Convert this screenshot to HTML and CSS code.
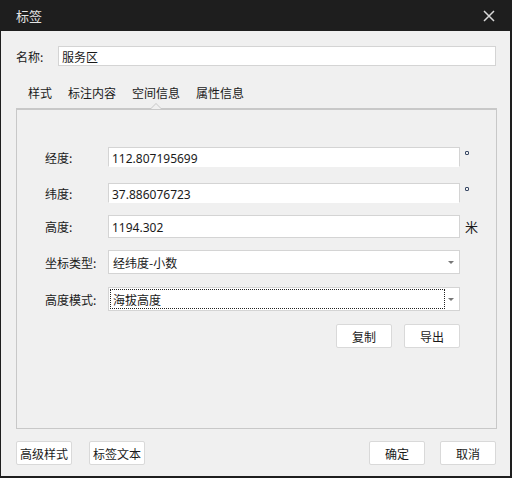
FILE: index.html
```html
<!DOCTYPE html>
<html lang="zh">
<head>
<meta charset="utf-8">
<title>标签</title>
<link rel="stylesheet" href="styles.css">
</head>
<body>
<div class="window">
  <div class="titlebar">
    <span class="title">标签</span>
    <svg class="close" width="12" height="12" viewBox="0 0 12 12"><path d="M1 1 L11 11 M11 1 L1 11" stroke="#d8d8d8" stroke-width="1.5" fill="none"/></svg>
  </div>
  <div class="content">
    <div class="name-row">
      <span class="label">名称:</span>
      <div class="input name-input">服务区</div>
    </div>
    <div class="tabs">
      <span class="tab">样式</span>
      <span class="tab">标注内容</span>
      <span class="tab active">空间信息</span>
      <span class="tab">属性信息</span>
    </div>
    <div class="panel">
      <div class="row r1">
        <span class="flabel">经度:</span>
        <div class="input field short">112.807195699</div>
        <span class="unit"><span class="deg"></span></span>
      </div>
      <div class="row r2">
        <span class="flabel">纬度:</span>
        <div class="input field short">37.886076723</div>
        <span class="unit"><span class="deg"></span></span>
      </div>
      <div class="row r3">
        <span class="flabel">高度:</span>
        <div class="input field">1194.302</div>
        <span class="unit mi">米</span>
      </div>
      <div class="row r4">
        <span class="flabel">坐标类型:</span>
        <div class="input field select"><span class="sel-text">经纬度-小数</span><span class="arrow"></span></div>
      </div>
      <div class="row r5">
        <span class="flabel">高度模式:</span>
        <div class="input field select"><span class="sel-text focus">海拔高度</span><span class="arrow"></span></div>
      </div>
      <div class="actions">
        <button class="btn">复制</button>
        <button class="btn">导出</button>
      </div>
    </div>
    <div class="footer">
      <div class="group">
        <button class="btn">高级样式</button>
        <button class="btn">标签文本</button>
      </div>
      <div class="group right">
        <button class="btn">确定</button>
        <button class="btn">取消</button>
      </div>
    </div>
  </div>
</div>
</body>
</html>
```
FILE: styles.css
```css
* { box-sizing: border-box; }
html, body {
  margin: 0;
  padding: 0;
  background: #1e1e1e;
}
body {
  font-family: "Noto Sans", "Noto Sans CJK SC", sans-serif;
  font-size: 12px;
  color: #1a1a1a;
}
.window {
  width: 512px;
  height: 478px;
  display: flex;
  flex-direction: column;
}
.titlebar {
  height: 31px;
  flex: none;
  display: flex;
  align-items: center;
  justify-content: space-between;
  padding: 0 17px 0 16px;
  background: #1e1e1e;
}
.title {
  color: #e4e4e4;
  font-size: 13px;
  font-family: "Noto Sans CJK SC", sans-serif;
}
.close { display: block; margin-top: 1px; }
.content {
  flex: 1;
  margin: 0 2px 2px 1px;
  background: #f0f0f0;
  padding: 15px 14px 0 15px;
  display: flex;
  flex-direction: column;
}
.name-row {
  display: flex;
  align-items: center;
  height: 20px;
}
.label {
  width: 42px;
  font-family: "Noto Sans CJK SC", sans-serif;
  font-size: 12px;
}
.input {
  background: #fff;
  border: 1px solid #d4d4d4;
  display: flex;
  align-items: center;
  padding-left: 3px;
  font-size: 12px;
  font-family: "Noto Sans", "Noto Sans CJK SC", sans-serif;
  color: #1a1a1a;
}
.name-input {
  flex: 1;
  height: 20px;
  font-family: "Noto Sans CJK SC", sans-serif;
}
.tabs {
  display: flex;
  height: 28px;
  margin-top: 14px;
  padding-left: 4px;
  align-items: flex-start;
}
.tab {
  padding: 0 8px;
  font-family: "Noto Sans CJK SC", sans-serif;
  font-size: 12px;
  position: relative;
  height: 28px;
  line-height: 25px;
}
.tab.active::after {
  content: "";
  position: absolute;
  left: 50%;
  bottom: -1px;
  margin-left: -6px;
  width: 0;
  height: 0;
  border-left: 6px solid transparent;
  border-right: 6px solid transparent;
  border-bottom: 6px solid #c8c8c8;
}
.tab.active::before {
  content: "";
  position: absolute;
  left: 50%;
  bottom: -1px;
  margin-left: -5px;
  width: 0;
  height: 0;
  border-left: 5px solid transparent;
  border-right: 5px solid transparent;
  border-bottom: 5px solid #f0f0f0;
  z-index: 2;
}
.panel {
  width: 481px;
  height: 321px;
  border: 1px solid #c8c8c8;
  border-top-width: 2px;
  padding: 37px 0 0 28px;
  display: flex;
  flex-direction: column;
}
.row {
  display: flex;
  align-items: center;
}
.r1 { height: 20px; margin-bottom: 16px; }
.r2 { height: 20px; margin-bottom: 12px; }
.r3 { height: 23px; margin-bottom: 12px; }
.r4 { height: 24px; margin-bottom: 13px; }
.r5 { height: 24px; }
.flabel {
  width: 63px;
  font-family: "Noto Sans CJK SC", sans-serif;
  font-size: 12px;
}
.field {
  width: 352px;
  height: 100%;
  padding-left: 3px;
  padding-top: 2px;
}
.field.short { border-bottom-color: #fff; }
.unit {
  margin-left: 5px;
  align-self: flex-start;
  height: 100%;
}
.deg {
  display: block;
  width: 4px;
  height: 4px;
  border: 1px solid #3a4a66;
  border-radius: 1px;
  margin-top: 4px;
}
.mi {
  font-family: "Noto Sans CJK SC", sans-serif;
  font-size: 13px;
  line-height: 23px;
  align-self: center;
}
.select {
  justify-content: space-between;
  padding: 1px 4px 1px 1px;
  font-family: "Noto Sans CJK SC", sans-serif;
}
.sel-text {
  flex: 0 0 335px;
  height: 100%;
  display: flex;
  align-items: center;
  padding-left: 2px;
  border: 1px dotted transparent;
}
.sel-text.focus { border-color: #222; }
.arrow {
  width: 0;
  height: 0;
  border-left: 3px solid transparent;
  border-right: 3px solid transparent;
  border-top: 3px solid #777;
  margin-right: 1px;
  margin-top: 1px;
}
.actions {
  display: flex;
  justify-content: flex-end;
  gap: 12px;
  margin-top: 13px;
  width: 415px;
}
.btn {
  width: 56px;
  height: 24px;
  background: #fff;
  border: 1px solid #d9d9d9;
  border-radius: 2px;
  padding: 0;
  font-family: "Noto Sans CJK SC", sans-serif;
  font-size: 12px;
  color: #1a1a1a;
}
.footer {
  display: flex;
  justify-content: space-between;
  margin-top: 12px;
}
.group { display: flex; gap: 17px; }
.group.right { gap: 15px; }
```
